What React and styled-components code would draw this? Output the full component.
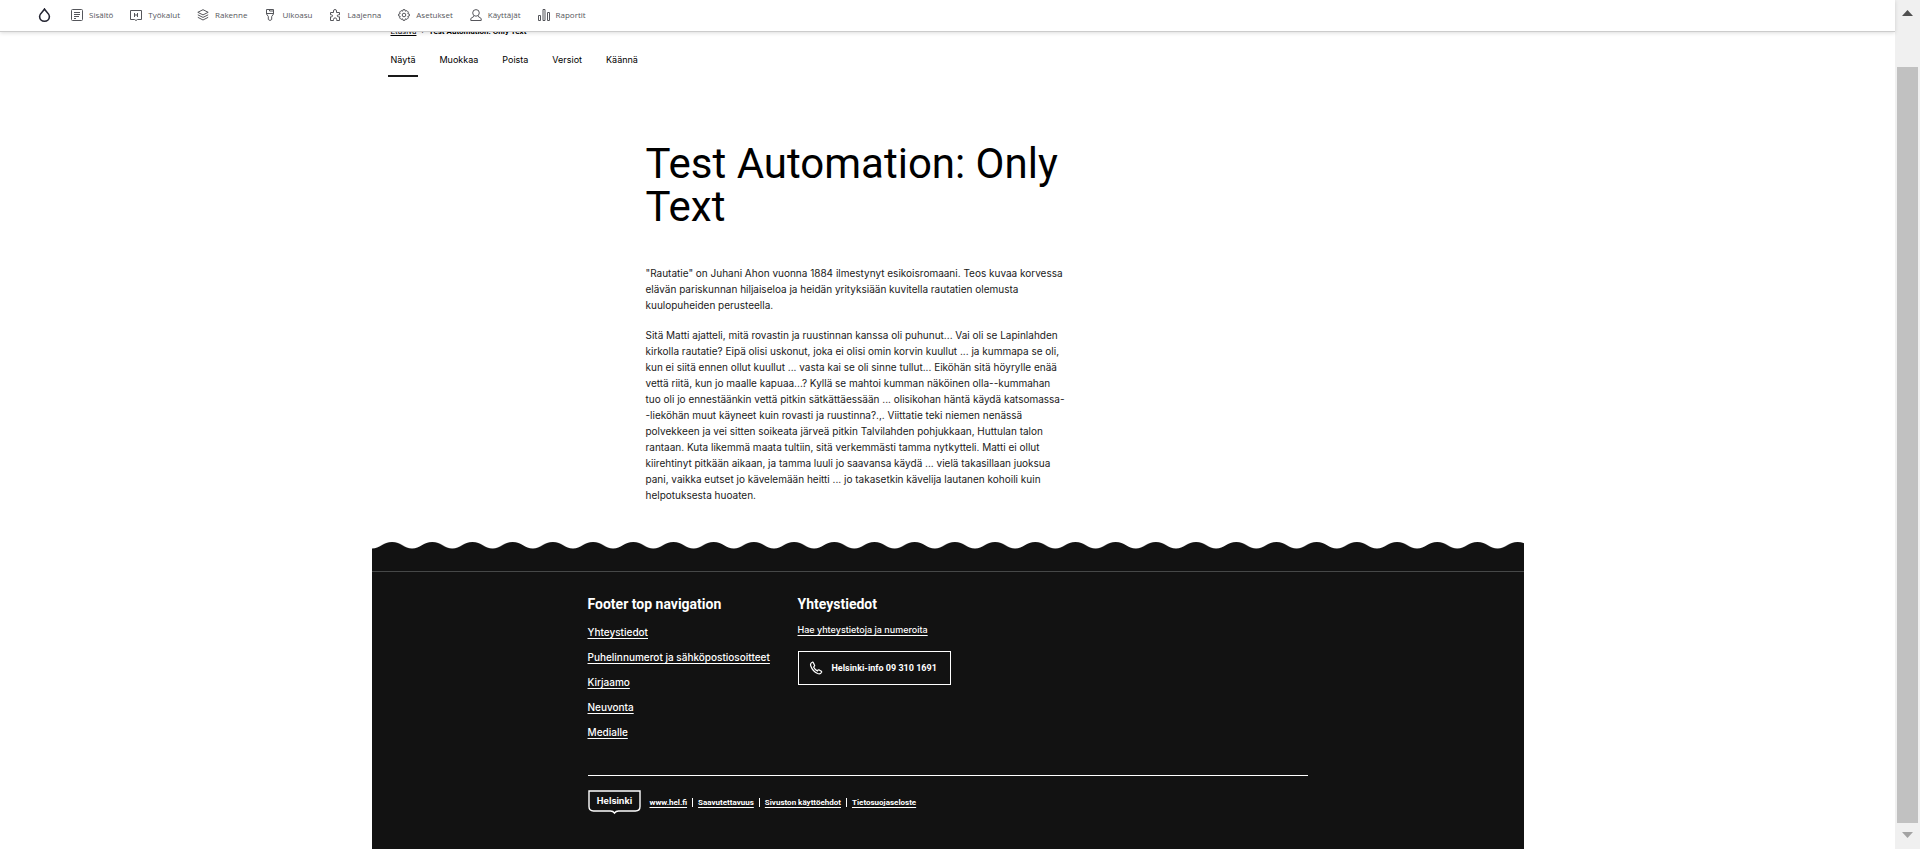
import React from "react";
import styled, { createGlobalStyle } from "styled-components";

const GlobalStyle = createGlobalStyle`
  *, *::before, *::after { box-sizing: border-box; }
  body { margin: 0; background: #fff; color: #000; font-family: Roboto, "Liberation Sans", sans-serif; }
  h1, h2, p, ul, ol { margin: 0; padding: 0; }
  ul, ol { list-style: none; }
  a { color: inherit; }
`;

const Shell = styled.div`
  display: flex;
  min-height: 100vh;
`;

const Page = styled.div`
  flex: 1;
  min-width: 0;
  display: flex;
  flex-direction: column;
`;

const Toolbar = styled.header`
  position: sticky;
  top: 0;
  z-index: 2;
  display: flex;
  align-items: center;
  gap: 20px;
  height: 32px;
  flex: none;
  padding: 0 0 1px 38px;
  background: #fff;
  border-bottom: 1px solid #ccc;
  box-shadow: 0 1px 4px rgba(0, 0, 0, 0.14);
  color: #55565b;
  font: 8px/12px "Open Sans", "Noto Sans", sans-serif;
`;

const HomeLink = styled.a`
  display: flex;
  color: #222330;
`;

const ToolList = styled.ul`
  display: flex;
  gap: 17px;
`;

const ToolLink = styled.a`
  display: flex;
  align-items: center;
  gap: 6px;
  text-decoration: none;
  white-space: nowrap;
`;

const Container = styled.div`
  width: 100%;
  max-width: 1152px;
  margin: 0 auto;
`;

const Breadcrumb = styled.nav`
  display: flex;
  gap: 5px;
  height: 12px;
  margin-top: -6px;
  padding-left: 19px;
  font-size: 8px;
  line-height: 12px;
  strong { font-weight: 700; }
`;

const Tabs = styled.nav`
  display: flex;
  gap: 18px;
  margin-top: 15px;
  padding-left: 16px;
`;

const Tab = styled.a`
  padding: 0 3px 8px;
  border-bottom: 2px solid ${(p) => (p.$active ? "#1a1a1a" : "transparent")};
  font-family: Inter, sans-serif;
  font-size: 9px;
  line-height: 14px;
  text-decoration: none;
`;

const Article = styled.article`
  padding: 65px 0 0 274px;
`;

const Title = styled.h1`
  font-size: 42px;
  line-height: 43px;
  font-weight: 400;
`;

const Body = styled.div`
  display: flex;
  flex-direction: column;
  gap: 14px;
  margin-top: 37px;
  color: #1a1a1a;
  font-family: Inter, sans-serif;
  font-size: 10px;
  font-weight: 400;
  line-height: 16px;
  white-space: nowrap;
`;

const Footer = styled.footer`
  flex: 1;
  display: flex;
  flex-direction: column;
  width: 100%;
  max-width: 1152px;
  margin: 39px auto 0;
  color: #fff;
`;

const Wave = styled.svg`
  display: block;
  width: 100%;
  height: 8px;
  flex: none;
`;

const FooterBody = styled.div`
  flex: 1;
  padding-top: 21px;
  background: #121212;
`;

const FooterInner = styled.div`
  border-top: 1px solid #464848;
  padding: 22px 216px 24px;
`;

const Columns = styled.div`
  display: grid;
  grid-template-columns: 210px 1fr;
  min-height: 181px;
`;

const FooterHeading = styled.h2`
  margin-bottom: 9px;
  font-size: 14px;
  line-height: 20px;
  font-weight: 700;
`;

const LinkList = styled.ul`
  display: grid;
  gap: 9px;
  padding-top: 1px;
  font-family: Inter, sans-serif;
  font-size: 10px;
  line-height: 16px;
  font-weight: 500;
`;

const FooterLink = styled.a`
  text-underline-offset: 2px;
`;

const ContactLink = styled(FooterLink)`
  display: block;
  font-family: Inter, sans-serif;
  font-size: 9px;
  line-height: 14px;
  font-weight: 500;
`;

const PhoneButton = styled.button`
  display: flex;
  align-items: center;
  gap: 9px;
  height: 34px;
  margin-top: 14px;
  padding: 0 13px 0 10px;
  border: 1px solid #fff;
  background: transparent;
  color: #fff;
  font: 700 9px/14px Roboto, "Liberation Sans", sans-serif;
`;

const Base = styled.div`
  display: flex;
  align-items: center;
  gap: 9px;
  padding-top: 14px;
  border-top: 1px solid #fff;
`;

const Logo = styled.svg`
  display: block;
  flex: none;
`;

const LegalList = styled.ul`
  display: flex;
  font-size: 8px;
  line-height: 9px;
  font-weight: 700;
  li + li { margin-left: 5px; padding-left: 5px; border-left: 1px solid #fff; }
`;

const ScrollTrack = styled.div`
  position: sticky;
  top: 0;
  display: flex;
  flex-direction: column;
  width: 25px;
  height: 100vh;
  padding: 10px 2px 11px;
  background: #f0f0f0;
`;

const Arrow = styled.svg`
  display: block;
  margin: 0 auto;
  flex: none;
`;

const Thumb = styled.div`
  flex: 1;
  margin: 51px 0 9px;
  background: #c1c1c1;
`;

const icons = {
  content: <><rect x="0.5" y="0.5" width="11" height="11" rx="1" /><path d="M3 3.500h6M3 5.500h6M3 7.500h5M3 9.500h2" /></>,
  tools: <path d="M0.500 1.500h11v9h-4l-1.500 1-1.500-1h-4zM4.500 4v4M7.500 4v4M4.500 6h3" />,
  structure: <path d="M6 0.700l5.200 2.600L6 5.900 0.800 3.300zM0.800 5.800L6 8.400l5.200-2.600M0.800 8.300L6 11l5.200-2.700" />,
  appearance: <path d="M2.500 0.500h7v4.500l-1.800 2.500v3L6 11.500 4.300 10.500V7.500L2.500 5zM2.500 4.500h7M5.500 0.500v1.500h4" />,
  extend: <path d="M4.500 3.500V2a1.500 1.500 0 0 1 3 0v1.500h3v2.300H9.300a1 1 0 0 0 0 2h1.200v3.700H7.700v-1a1.600 1.600 0 0 0-3.200 0v1H1.500V7.800h1a1 1 0 0 0 0-2h-1V3.500z" />,
  config: <><path d="M5 0.700h2l.4 1.500L8.900 1.600l1.500 1.500-.6 1.500 1.500.4v2l-1.500.4.600 1.500-1.500 1.500-1.500-.6-.4 1.500H5l-.4-1.500-1.500.6-1.500-1.500.6-1.500L.7 7V5l1.500-.4-.6-1.500 1.500-1.500 1.500.6z" /><circle cx="6" cy="6" r="1.800" /></>,
  people: <><circle cx="6" cy="3.900" r="3.300" /><path d="M4 7.300L0.800 9.500v2h10.400v-2L8 7.300" /></>,
  reports: <path d="M0.500 6.500h2v5h-2zM5 0.500h2v11H5zM9.500 3.500h2v8h-2z" />,
};

const tools = [
  ["Sisältö", "content"],
  ["Työkalut", "tools"],
  ["Rakenne", "structure"],
  ["Ulkoasu", "appearance"],
  ["Laajenna", "extend"],
  ["Asetukset", "config"],
  ["Käyttäjät", "people"],
  ["Raportit", "reports"],
];

const tabs = ["Näytä", "Muokkaa", "Poista", "Versiot", "Käännä"];

const paragraphs = [
  [
    '"Rautatie" on Juhani Ahon vuonna 1884 ilmestynyt esikoisromaani. Teos kuvaa korvessa',
    "elävän pariskunnan hiljaiseloa ja heidän yrityksiään kuvitella rautatien olemusta",
    "kuulopuheiden perusteella.",
  ],
  [
    "Sitä Matti ajatteli, mitä rovastin ja ruustinnan kanssa oli puhunut... Vai oli se Lapinlahden",
    "kirkolla rautatie? Eipä olisi uskonut, joka ei olisi omin korvin kuullut ... ja kummapa se oli,",
    "kun ei siitä ennen ollut kuullut ... vasta kai se oli sinne tullut... Eiköhän sitä höyrylle enää",
    "vettä riitä, kun jo maalle kapuaa...? Kyllä se mahtoi kumman näköinen olla--kummahan",
    "tuo oli jo ennestäänkin vettä pitkin sätkättäessään ... olisikohan häntä käydä katsomassa-",
    "-lieköhän muut käyneet kuin rovasti ja ruustinna?.,. Viittatie teki niemen nenässä",
    "polvekkeen ja vei sitten soikeata järveä pitkin Talvilahden pohjukkaan, Huttulan talon",
    "rantaan. Kuta likemmä maata tultiin, sitä verkemmästi tamma nytkytteli. Matti ei ollut",
    "kiirehtinyt pitkään aikaan, ja tamma luuli jo saavansa käydä ... vielä takasillaan juoksua",
    "pani, vaikka eutset jo kävelemään heitti ... jo takasetkin kävelija lautanen kohoili kuin",
    "helpotuksesta huoaten.",
  ],
];

const footerLinks = ["Yhteystiedot", "Puhelinnumerot ja sähköpostiosoitteet", "Kirjaamo", "Neuvonta", "Medialle"];
const legalLinks = ["www.hel.fi", "Saavutettavuus", "Sivuston käyttöehdot", "Tietosuojaseloste"];

export default function App() {
  return (
    <Shell>
      <GlobalStyle />
      <Page>
        <Toolbar>
          <HomeLink href="#" aria-label="Etusivu">
            <svg width="13" height="14" viewBox="0 0 13 14" fill="none" stroke="currentColor" strokeWidth="1.600">
              <path d="M6.500 1.200C5.500 3.200 1.600 5.400 1.600 8.500a4.900 4.700 0 0 0 9.800 0C11.400 5.400 7.500 3.200 6.500 1.200z" />
            </svg>
          </HomeLink>
          <ToolList>
            {tools.map(([label, icon]) => (
              <li key={label}>
                <ToolLink href="#">
                  <svg width="12" height="12" viewBox="0 0 12 12" fill="none" stroke="currentColor">
                    {icons[icon]}
                  </svg>
                  {label}
                </ToolLink>
              </li>
            ))}
          </ToolList>
        </Toolbar>

        <Container>
          <Breadcrumb>
            <a href="#">Etusivu</a>
            <span>›</span>
            <strong>Test Automation: Only Text</strong>
          </Breadcrumb>
          <Tabs>
            {tabs.map((t, i) => (
              <Tab key={t} href="#" $active={i === 0}>{t}</Tab>
            ))}
          </Tabs>
          <Article>
            <Title>Test Automation: Only<br />Text</Title>
            <Body>
              {paragraphs.map((lines) => (
                <p key={lines[0]}>
                  {lines.map((line, i) => (
                    <React.Fragment key={line}>{i > 0 && <br />}{line}</React.Fragment>
                  ))}
                </p>
              ))}
            </Body>
          </Article>
        </Container>

        <Footer>
          <Wave aria-hidden="true">
            <defs>
              <pattern id="wave" width="40.200" height="8" patternUnits="userSpaceOnUse">
                <path d="M0 6.500C8 6.500 11 0 20.100 0S32 6.500 40.200 6.500V8H0z" fill="#121212" />
              </pattern>
            </defs>
            <rect width="100%" height="8" fill="url(#wave)" />
          </Wave>
          <FooterBody>
            <FooterInner>
              <Columns>
                <section>
                  <FooterHeading>Footer top navigation</FooterHeading>
                  <LinkList>
                    {footerLinks.map((l) => (
                      <li key={l}><FooterLink href="#">{l}</FooterLink></li>
                    ))}
                  </LinkList>
                </section>
                <section>
                  <FooterHeading>Yhteystiedot</FooterHeading>
                  <ContactLink href="#">Hae yhteystietoja ja numeroita</ContactLink>
                  <PhoneButton type="button">
                    <svg width="14" height="14" viewBox="0 0 14 14" fill="none" stroke="currentColor" strokeWidth="1.200">
                      <path d="M3.200 1.200c-1.300.6-2 2-1.400 3.800 1.200 3.400 3.400 6 6.800 7.500 1.700.7 3.200.2 4-1.200.2-.4.100-.7-.2-1L10.200 8.900c-.4-.2-.8-.2-1.100.1l-.8.900C6.600 9 5.400 7.700 4.600 6l.8-.9c.3-.3.3-.7.100-1L4.200 1.500c-.2-.4-.6-.5-1-.3z" />
                    </svg>
                    Helsinki-info 09 310 1691
                  </PhoneButton>
                </section>
              </Columns>
              <Base>
                <Logo width="53" height="25" viewBox="0 0 53 25" role="img" aria-label="Helsinki">
                  <path d="M1 1h51v15.500q0 4.500-4.500 4.500H30.500q-2.500 0-4 2-1.500-2-4-2H5.500Q1 21 1 16.500z" fill="none" stroke="#fff" strokeWidth="1.400" />
                  <text x="26.500" y="14" textAnchor="middle" fill="#fff" fontFamily="Inter, sans-serif" fontSize="9" fontWeight="700">Helsinki</text>
                </Logo>
                <LegalList>
                  {legalLinks.map((l) => (
                    <li key={l}><FooterLink href="#">{l}</FooterLink></li>
                  ))}
                </LegalList>
              </Base>
            </FooterInner>
          </FooterBody>
        </Footer>
      </Page>
      <ScrollTrack aria-hidden="true">
        <Arrow width="11" height="6" viewBox="0 0 11 6"><path d="M0 6L5.500 0 11 6z" fill="#505050" /></Arrow>
        <Thumb />
        <Arrow width="11" height="6" viewBox="0 0 11 6"><path d="M0 0h11L5.500 6z" fill="#a3a3a3" /></Arrow>
      </ScrollTrack>
    </Shell>
  );
}
